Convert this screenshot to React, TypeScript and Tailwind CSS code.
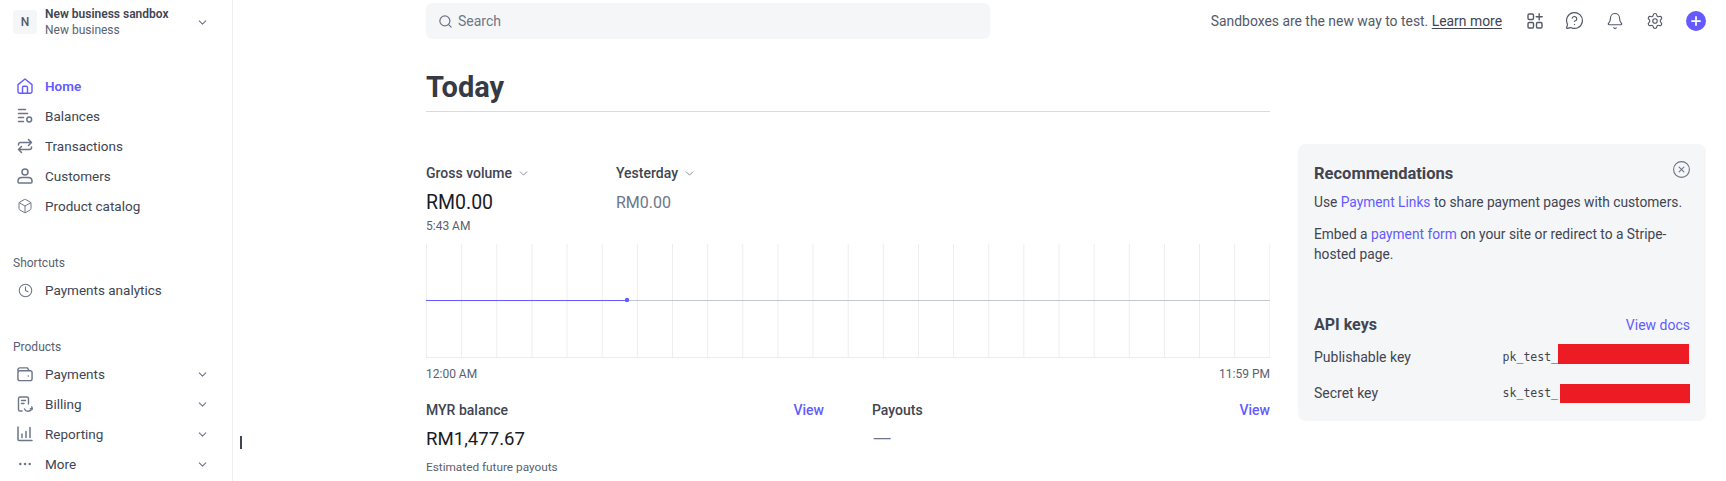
import { FC, ReactNode } from 'react';
import {
  Bell,
  Box,
  ChevronDown,
  CircleX,
  Clock,
  MessageCircleQuestion,
  Search,
  Settings,
  Plus,
  Ellipsis,
} from 'lucide-react';

const HomeIcon = () => (
  <svg width="16" height="16" viewBox="0 0 16 16" fill="none" stroke="currentColor" strokeWidth="1.4">
    <path d="M1 6.6 L8 1 L15 6.6 V13.6 A1.6 1.6 0 0 1 13.4 15.2 H2.6 A1.6 1.6 0 0 1 1 13.6 Z" strokeLinejoin="round" />
    <path d="M5.5 15 V9.5 A1.2 1.2 0 0 1 6.7 8.3 H9.3 A1.2 1.2 0 0 1 10.5 9.5 V15" />
  </svg>
);

const BalancesIcon = () => (
  <svg width="16" height="16" viewBox="0 0 16 16" fill="none" stroke="currentColor" strokeWidth="1.5" strokeLinecap="round">
    <path d="M1.5 1.5 H8.5 M1.5 5.5 H10.5 M1.5 9.5 H6.5 M1.5 13.5 H6.5" />
    <circle cx="12.2" cy="11.5" r="2.4" />
  </svg>
);

const TransactionsIcon = () => (
  <svg width="16" height="16" viewBox="0 0 16 16" fill="none" stroke="currentColor" strokeWidth="1.5" strokeLinecap="round" strokeLinejoin="round">
    <path d="M1.5 7 V6.5 A2 2 0 0 1 3.5 4.5 H14.5 M11.5 1.5 L14.5 4.5 L11.5 7.5" />
    <path d="M14.5 9 V9.5 A2 2 0 0 1 12.5 11.5 H1.5 M4.5 8.5 L1.5 11.5 L4.5 14.5" />
  </svg>
);

const CustomersIcon = () => (
  <svg width="16" height="16" viewBox="0 0 16 16" fill="none" stroke="currentColor" strokeWidth="1.5">
    <circle cx="8" cy="4" r="3" />
    <path d="M1 13 A3.6 3.6 0 0 1 4.6 9.6 H11.4 A3.6 3.6 0 0 1 15 13 V14 A1 1 0 0 1 14 15 H2 A1 1 0 0 1 1 14 Z" />
  </svg>
);

const WalletIcon = () => (
  <svg width="17" height="16" viewBox="0 0 17 16" fill="none" stroke="currentColor" strokeWidth="1.5">
    <path d="M1 5 V3.5 A2 2 0 0 1 3 1.5 H11 L13 4.5" strokeLinejoin="round" />
    <rect x="1" y="4.5" width="15" height="10.5" rx="2" />
    <circle cx="12" cy="10" r="0.8" fill="currentColor" stroke="none" />
  </svg>
);

const BillingIcon = () => (
  <svg width="16" height="17" viewBox="0 0 16 17" fill="none" stroke="currentColor" strokeWidth="1.4" strokeLinecap="round">
    <path d="M5 15 H3 A1.6 1.6 0 0 1 1.5 13.4 V2.6 A1.6 1.6 0 0 1 3 1 H10 A1.6 1.6 0 0 1 11.5 2.6 V8" />
    <path d="M4.5 4.5 H8.5 M4.5 7.5 H7" />
    <path d="M7.5 13 A4 4 0 0 0 15 12 M14.8 11 L15.4 13 L13.4 12.8" />
  </svg>
);

const ReportingIcon = () => (
  <svg width="16" height="16" viewBox="0 0 16 16" fill="none" stroke="currentColor" strokeWidth="1.5" strokeLinecap="round">
    <path d="M1 1 V13.5 A1 1 0 0 0 2 14.5 H15" />
    <path d="M5 8 V11.5 M9 5.5 V11.5 M13 1.5 V11.5" />
  </svg>
);

const AppsIcon = () => (
  <svg width="16" height="16" viewBox="0 0 16 16" fill="none" stroke="currentColor" strokeWidth="1.4" strokeLinecap="round">
    <rect x="1" y="1" width="5.5" height="5.5" rx="1.2" />
    <rect x="1" y="9.5" width="5.5" height="5.5" rx="1.2" />
    <rect x="9.5" y="9.5" width="5.5" height="5.5" rx="1.2" />
    <path d="M12.2 0.8 V6.8 M9.2 3.8 H15.2" />
  </svg>
);

interface NavItemProps {
  icon: ReactNode;
  label: string;
  active?: boolean;
  expandable?: boolean;
}

const NavItem: FC<NavItemProps> = ({ icon, label, active, expandable }) => (
  <div className={`h-[30px] flex items-center text-[13.5px] ${active ? 'text-[#635bff] font-semibold' : 'text-[#414552]'}`}>
    <div className={`w-[33px] pl-[17px] shrink-0 flex items-center ${active ? '' : 'text-[#6c7688]'}`}>
      <div className="w-4 flex justify-center">{icon}</div>
    </div>
    <span className="pl-[12px] flex-1">{label}</span>
    {expandable && <ChevronDown size={13} strokeWidth={2} className="text-[#6c7688] mr-[23px]" />}
  </div>
);

const SectionLabel: FC<{ label: string }> = ({ label }) => (
  <div className="pl-[13px] h-[21px] text-[12px] leading-[18px] text-[#596171]">{label}</div>
);

const Sidebar = () => (
  <aside className="w-[233px] h-full shrink-0 border-r border-[#ebeef1] flex flex-col">
    <div className="pl-[13px] pr-[23px] pt-[6px] flex items-center">
      <div className="w-6 h-6 rounded-[4px] bg-[#f5f6f8] text-[#545969] text-[12px] font-medium flex items-center justify-center">
        N
      </div>
      <div className="ml-[8px] flex-1 text-[12px] leading-[16px]">
        <div className="font-semibold text-[#414552]">New business sandbox</div>
        <div className="text-[#596171]">New business</div>
      </div>
      <ChevronDown size={13} strokeWidth={2} className="text-[#6c7688]" />
    </div>

    <nav className="mt-[33px]">
      <NavItem active icon={<HomeIcon />} label="Home" />
      <NavItem icon={<BalancesIcon />} label="Balances" />
      <NavItem icon={<TransactionsIcon />} label="Transactions" />
      <NavItem icon={<CustomersIcon />} label="Customers" />
      <NavItem icon={<Box size={18} strokeWidth={1.5} />} label="Product catalog" />
    </nav>

    <div className="mt-[33px]">
      <SectionLabel label="Shortcuts" />
      <NavItem icon={<Clock size={15} strokeWidth={1.7} />} label="Payments analytics" />
    </div>

    <div className="mt-[33px]">
      <SectionLabel label="Products" />
      <NavItem expandable icon={<WalletIcon />} label="Payments" />
      <NavItem expandable icon={<BillingIcon />} label="Billing" />
      <NavItem expandable icon={<ReportingIcon />} label="Reporting" />
      <NavItem expandable icon={<Ellipsis size={16} strokeWidth={1.8} />} label="More" />
    </div>
  </aside>
);

const Header = () => (
  <header className="h-[42px] flex items-center">
    <div className="w-[564px] h-9 rounded-md bg-[#f5f6f8] flex items-center pl-[12px] text-[14px] text-[#6c7688]">
      <Search size={15} strokeWidth={2} />
      <span className="ml-[5px]">Search</span>
    </div>
    <div className="flex-1 flex items-center justify-end pr-[20px] text-[#545969]">
      <span className="text-[13.9px]">
        Sandboxes are the new way to test.{' '}
        <span className="underline underline-offset-2 text-[#414552]">Learn more</span>
      </span>
      <div className="ml-[25px] flex items-center gap-[22px]">
        <AppsIcon />
        <MessageCircleQuestion size={19} strokeWidth={1.5} />
        <Bell size={18} strokeWidth={1.5} />
        <Settings size={18} strokeWidth={1.5} />
        <div className="w-5 h-5 rounded-full bg-[#635bff] flex items-center justify-center text-white">
          <Plus size={14} strokeWidth={3} />
        </div>
      </div>
    </div>
  </header>
);

// 24 columns of 35.17px across the chart
const gridLines = Array.from({ length: 25 }, (_, i) => 0.5 + i * 35.14);

const Chart = () => (
  <svg width="844" height="114" viewBox="0 0 844 114" className="block mt-[10px]">
    {gridLines.map((x, i) => (
      <line key={i} x1={x} x2={x} y1="0" y2="114" stroke="#ebeef1" />
    ))}
    <line x1="0" x2="844" y1="113.5" y2="113.5" stroke="#ebeef1" />
    <line x1="201" x2="844" y1="56.5" y2="56.5" stroke="#c0c8d2" />
    <line x1="0" x2="201" y1="56.5" y2="56.5" stroke="#635bff" />
    <circle cx="201" cy="56" r="2.2" fill="#635bff" />
  </svg>
);

const Metric: FC<{ label: string; children: ReactNode; width: string }> = ({ label, children, width }) => (
  <div className={width}>
    <div className="flex items-center h-[20px] text-[14px] font-medium text-[#414552]">
      {label}
      <ChevronDown size={13} strokeWidth={1.5} className="ml-[5px] text-[#6c7688]" />
    </div>
    {children}
  </div>
);

const Overview = () => (
  <section className="w-[844px] shrink-0">
    <div className="flex mt-[51px]">
      <Metric label="Gross volume" width="w-[190px]">
        <div className="mt-[6px] h-[28px] text-[19.5px] leading-[28px] text-[#1a1b25]">RM0.00</div>
        <div className="mt-[1px] h-[16px] text-[12px] leading-[16px] text-[#596171]">5:43 AM</div>
      </Metric>
      <Metric label="Yesterday" width="w-[190px]">
        <div className="mt-[6px] h-[28px] text-[16px] leading-[28px] text-[#6c7688]">RM0.00</div>
      </Metric>
    </div>
    <Chart />
    <div className="mt-[8px] flex justify-between text-[12px] leading-[16px] text-[#596171]">
      <span>12:00 AM</span>
      <span>11:59 PM</span>
    </div>
    <div className="mt-[18px] flex gap-[48px]">
      <div className="flex-1">
        <div className="flex justify-between text-[14px] leading-[20px] font-medium">
          <span className="text-[#414552]">MYR balance</span>
          <span className="text-[#635bff]">View</span>
        </div>
        <div className="mt-[5px] text-[18.6px] leading-[28px] text-[#1a1b25]">RM1,477.67</div>
        <div className="mt-[6px] text-[11.8px] leading-[16px] text-[#596171]">Estimated future payouts</div>
      </div>
      <div className="flex-1">
        <div className="flex justify-between text-[14px] leading-[20px] font-medium">
          <span className="text-[#414552]">Payouts</span>
          <span className="text-[#635bff]">View</span>
        </div>
        <div className="mt-[5px] text-[26px] leading-[28px] font-light text-[#6c7688]">—</div>
      </div>
    </div>
  </section>
);

const KeyRow: FC<{ label: string; prefix: string; redactClass: string }> = ({ label, prefix, redactClass }) => (
  <div className="flex items-center h-[20px] text-[14px] text-[#414552]">
    <span className="flex-1">{label}</span>
    <span className="font-['DejaVu_Sans_Mono',monospace] text-[11.5px]">{prefix}</span>
    <span className={`bg-[#ed1c24] ${redactClass}`} />
  </div>
);

const SideCard = () => (
  <aside className="ml-[28px] mt-[32px] w-[408px] h-[277px] rounded-lg bg-[#f5f6f8] px-4 pt-[19px] text-[14px] leading-[20px] text-[#414552]">
    <div className="flex justify-between items-start">
      <h2 className="text-[16.5px] leading-[22px] font-bold">Recommendations</h2>
      <CircleX size={19} strokeWidth={1.4} className="text-[#6c7688] -mt-[3px] -mr-[1px]" />
    </div>
    <p className="mt-[7px] text-[13.75px]">
      Use <span className="text-[#635bff]">Payment Links</span> to share payment pages with customers.
    </p>
    <p className="mt-[12px] text-[13.75px]">
      Embed a <span className="text-[#635bff]">payment form</span> on your site or redirect to a Stripe-hosted page.
    </p>
    <div className="mt-[50px] flex justify-between items-center">
      <h2 className="text-[16px] leading-[22px] font-bold">API keys</h2>
      <span className="text-[#635bff]">View docs</span>
    </div>
    <div className="mt-[11px] flex flex-col gap-[16px]">
      <KeyRow label="Publishable key" prefix="pk_test_" redactClass="w-[131px] h-[20px] mb-[6px] mr-[1px]" />
      <KeyRow label="Secret key" prefix="sk_test_" redactClass="w-[130px] h-[19px] ml-[2px]" />
    </div>
  </aside>
);

export default function App() {
  return (
    <div className="relative w-[1726px] h-[481px] overflow-hidden bg-white flex font-['Roboto',sans-serif]">
      <Sidebar />
      <main className="flex-1 pl-[193px] flex flex-col min-w-0">
        <Header />
        <div className="w-[844px] mt-[25px] h-[45px] border-b border-[#d8dbe2]">
          <h1 className="text-[29px] leading-[40px] font-bold text-[#353a44]">Today</h1>
        </div>
        <div className="flex">
          <Overview />
          <SideCard />
        </div>
      </main>
      {/* text cursor captured in the screenshot */}
      <div className="absolute left-[240px] top-[436px] w-[2px] h-[13px] bg-[#414552]" />
    </div>
  );
}
